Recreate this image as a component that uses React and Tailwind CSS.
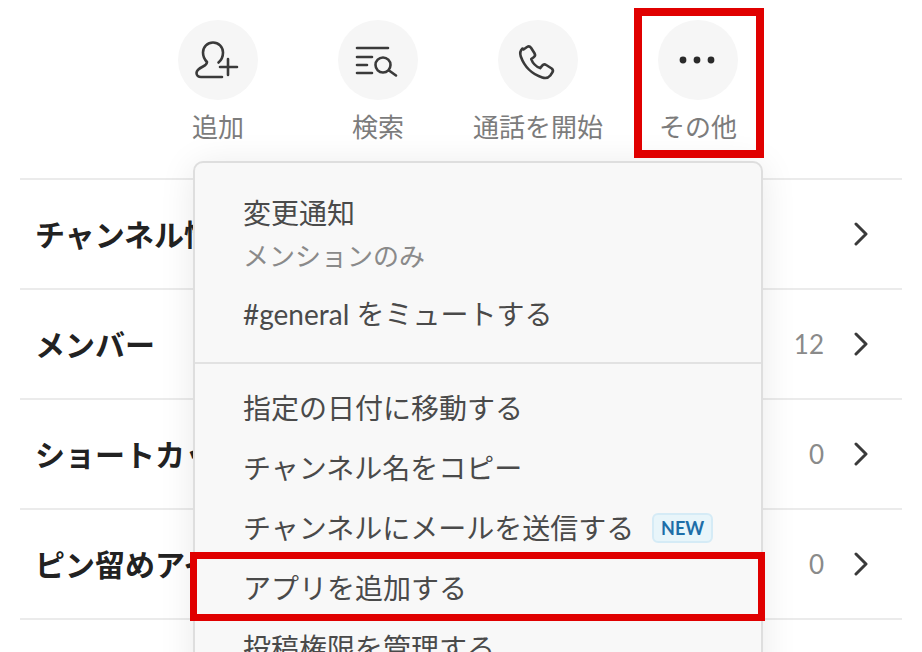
const JP = { fontFamily: 'Lato, "Noto Sans CJK JP", sans-serif' };

function Action({ label, children }) {
  return (
    <div className="w-40 flex flex-col items-center">
      <div className="w-20 h-20 rounded-full bg-[#f6f6f6]">
        <svg width="80" height="80" viewBox="0 0 80 80" fill="none" stroke="#3a3a3a" strokeWidth="2.6" strokeLinecap="round" strokeLinejoin="round">
          {children}
        </svg>
      </div>
      <div className="mt-[10px] text-[26px] leading-[34px] text-[#7c7c7c] whitespace-nowrap">{label}</div>
    </div>
  );
}

function Row({ title, count }) {
  return (
    <div className="h-[110px] border-t-2 border-[#ebebeb] pl-4 pr-[34px] flex items-center">
      <div className="text-[30px] leading-none font-bold text-[#222] whitespace-nowrap flex-1 -ml-px">{title}</div>
      {count !== undefined && <div className="text-[26px] leading-none text-[#8a8a8a] mr-[30px]">{count}</div>}
      <svg width="14" height="24" viewBox="0 0 14 24" fill="none" stroke="#3a3a3a" strokeWidth="3" strokeLinecap="round" strokeLinejoin="round">
        <path d="M2 2 L12 12 L2 22" />
      </svg>
    </div>
  );
}

function Item({ children }) {
  return <div className="h-[60px] px-[48px] flex items-center text-[28px] leading-none text-[#4a4a4a] whitespace-nowrap">{children}</div>;
}

export default function App() {
  return (
    <div className="relative w-[922px] h-[652px] overflow-hidden bg-white" style={JP}>
      <div className="h-[178px] pt-5 pl-[138px] flex items-start">
        <Action label="追加">
          <path d="M29 42 c-2.5 -2.5 -4 -5.5 -4 -9.5 a10 10 0 0 1 20 0 c0 4 -1.5 7.5 -4.5 10 M29 42 c0 2 -1 3 -4 4.5 c-4 2 -6.5 3.5 -6.5 6.5 c0 2.5 2 4 4.5 4 h21" />
          <path d="M50 39 v16 M42 47 h17" />
        </Action>
        <Action label="検索">
          <path d="M19 28 h31 M19 37 h15 M19 45 h10 M19 53 h15" />
          <circle cx="45" cy="45" r="7.5" />
          <path d="M51 50.5 L58 55.5" />
        </Action>
        <Action label="通話を開始">
          <path d="M25.5 29.5 l3.5 -2.5 a3 3 0 0 1 4 .8 l3.5 5.5 a3 3 0 0 1 -.8 4 l-2.5 1.8 c1.5 4 5 7.5 9 9 l2 -2.5 a3 3 0 0 1 4 -.6 l5.5 3.5 a3 3 0 0 1 .6 4 l-2 3 c-2 2.5 -5 3 -8 2 c-10 -3 -18 -11 -21.5 -21 c-1 -3 -.5 -6 1.7 -8 z" />
        </Action>
        <Action label="その他">
          <g fill="#2a2a2a" stroke="none">
            <circle cx="25" cy="40" r="3.4" />
            <circle cx="39" cy="40" r="3.4" />
            <circle cx="53" cy="40" r="3.4" />
          </g>
        </Action>
      </div>

      <div className="mx-5">
        <Row title="チャンネル情報" />
        <Row title="メンバー" count="12" />
        <Row title="ショートカット" count="0" />
        <Row title="ピン留めアイテム" count="0" />
        <div className="border-t-2 border-[#ebebeb]" />
      </div>

      <div className="absolute left-[193px] top-[161px] w-[570px] h-[520px] rounded-[10px] border-2 border-[#dedede] bg-[#f8f8f8] shadow-[0_4px_36px_rgba(0,0,0,0.09)] pt-[21px]">
        <div className="h-[100px] px-[48px] pt-[8px] text-[28px] text-[#4a4a4a]">
          <div className="leading-[43px]">変更通知</div>
          <div className="leading-[43px] text-[26px] text-[#8a8a8a]">メンションのみ</div>
        </div>
        <Item>#general をミュートする</Item>
        <div className="mt-[18px] mb-[14px] border-t-2 border-[#e2e2e2]" />
        <Item>指定の日付に移動する</Item>
        <Item>チャンネル名をコピー</Item>
        <Item>
          チャンネルにメールを送信する
          <span className="ml-[18px] w-[63px] h-[30px] rounded-[6px] border-2 border-[#d5ebf6] bg-[#e8f5fa] text-[18px] font-bold text-[#1d6ea8] flex items-center justify-center">NEW</span>
        </Item>
        <Item>アプリを追加する</Item>
        <Item>投稿権限を管理する</Item>
      </div>

      <div className="absolute left-[634px] top-[8px] w-[130px] h-[150px] border-[8px] border-[#e00000]" />
      <div className="absolute left-[190px] top-[552px] w-[575px] h-[69px] border-[7px] border-[#e00000]" />
    </div>
  );
}
